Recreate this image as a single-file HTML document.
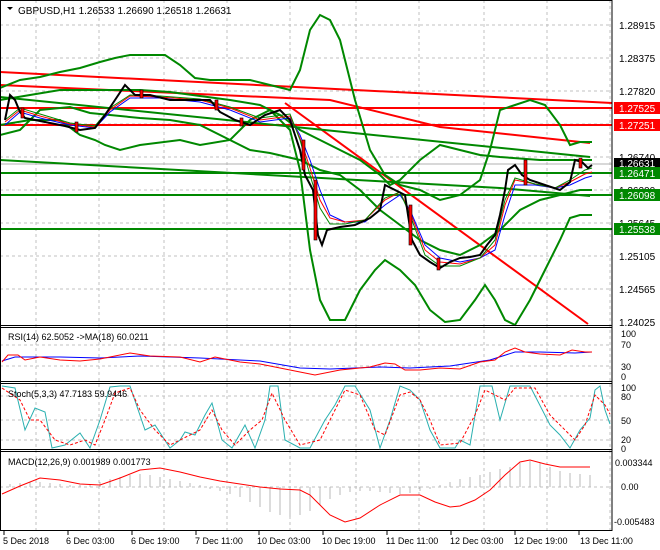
<!DOCTYPE html>
<html><head><meta charset="utf-8"><style>
html,body{margin:0;padding:0;background:#fff;}
svg{display:block;font-family:"Liberation Sans",sans-serif;}
</style></head><body>
<svg width="660" height="550" viewBox="0 0 660 550" xmlns="http://www.w3.org/2000/svg">
<rect width="660" height="550" fill="#fff"/>
<g stroke="#c0c0c0" stroke-dasharray="3,3" stroke-width="1">
<line x1="36" y1="0" x2="36" y2="530"/><line x1="99" y1="0" x2="99" y2="530"/><line x1="164" y1="0" x2="164" y2="530"/><line x1="227" y1="0" x2="227" y2="530"/><line x1="290" y1="0" x2="290" y2="530"/><line x1="356" y1="0" x2="356" y2="530"/><line x1="419" y1="0" x2="419" y2="530"/><line x1="484" y1="0" x2="484" y2="530"/><line x1="547" y1="0" x2="547" y2="530"/><line x1="610" y1="0" x2="610" y2="530"/>
<line x1="0" y1="25" x2="612" y2="25"/><line x1="0" y1="58" x2="612" y2="58"/><line x1="0" y1="91" x2="612" y2="91"/><line x1="0" y1="124" x2="612" y2="124"/><line x1="0" y1="157" x2="612" y2="157"/><line x1="0" y1="190" x2="612" y2="190"/><line x1="0" y1="223" x2="612" y2="223"/><line x1="0" y1="256" x2="612" y2="256"/><line x1="0" y1="289" x2="612" y2="289"/>
<line x1="0" y1="345" x2="612" y2="345"/><line x1="0" y1="366" x2="612" y2="366"/>
<line x1="0" y1="396" x2="612" y2="396"/><line x1="0" y1="420" x2="612" y2="420"/><line x1="0" y1="440" x2="612" y2="440"/>
<line x1="0" y1="487" x2="612" y2="487"/>
</g>
<line x1="0" y1="164" x2="612" y2="164" stroke="#b0b0b0"/>
<g fill="none" stroke-width="2">
<polyline stroke="#f00" points="0,72 612,103"/>
<polyline stroke="#f00" points="0,85 330,100 440,127 590,143"/>
<line stroke="#f00" x1="285" y1="103" x2="588" y2="324"/>
<line stroke="#f00" x1="0" y1="108" x2="612" y2="108"/>
<line stroke="#f00" x1="0" y1="125" x2="612" y2="125"/>
<polyline stroke="#080" points="0,97 590,157"/>
<polyline stroke="#080" points="0,160 500,188 590,196"/>
<line stroke="#080" x1="0" y1="173" x2="612" y2="173"/>
<line stroke="#080" x1="0" y1="195" x2="612" y2="195"/>
<line stroke="#080" x1="0" y1="229" x2="612" y2="229"/>
<polyline stroke="#080" points="0,88 20,80 40,77 60,72 80,68 100,62 115,58 130,55 165,55 180,65 195,78 210,80 250,80 270,85 290,90 300,70 310,30 320,15 330,20 340,40 355,100 370,150 385,175 400,185 420,190 440,200 460,195 480,180 490,150 500,110 515,105 530,100 545,105 560,125 570,145 580,142 592,142"/>
<polyline stroke="#080" points="0,125 30,120 60,120 80,135 95,140 105,145 120,150 140,145 180,140 200,145 230,140 250,120 270,110 290,130 300,170 310,250 320,300 330,320 345,320 360,290 375,270 385,260 400,270 415,285 430,310 445,322 460,320 475,300 485,285 495,300 505,320 515,325 530,300 545,270 560,240 570,218 580,215 592,215"/>
<polyline stroke="#080" points="0,100 30,95 60,90 140,90 170,92 200,96 230,100 260,105 280,115 300,130 320,140 340,150 360,160 380,175 390,185 400,180 420,160 440,145 460,150 480,155 500,157 540,160 592,160"/>
<polyline stroke="#080" points="0,135 20,130 40,110 70,107 90,113 110,115 140,118 170,120 200,125 230,140 250,150 270,153 300,160 320,170 340,175 360,190 380,210 400,225 420,240 440,250 460,255 480,245 500,230 520,210 540,200 560,195 580,190 592,190"/>
</g>
<g fill="none" stroke-width="1">
<polyline stroke="#00f" points="5,125 20,112 40,118 70,125 95,128 110,112 130,98 160,98 200,102 230,110 260,122 290,118 300,135 310,160 320,190 330,215 345,222 365,222 385,205 400,195 410,210 425,245 440,258 460,262 480,258 495,250 505,215 515,185 535,185 555,188 570,185 585,178 592,176"/>
<polyline stroke="#f00" points="5,122 20,110 40,116 70,124 95,127 110,110 130,96 160,97 200,100 230,108 260,120 290,116 300,138 310,168 320,200 330,218 345,222 365,220 385,200 400,192 410,212 425,250 440,262 460,264 480,258 495,245 505,205 515,180 535,184 555,188 570,182 585,174 592,172"/>
<polyline stroke="#080" points="5,120 20,108 40,114 70,123 95,126 110,108 130,95 160,96 200,99 230,107 260,118 290,114 300,140 310,175 320,208 330,224 345,224 365,220 385,198 400,192 410,215 425,255 440,266 460,266 480,258 495,240 505,200 515,178 535,184 555,188 570,180 585,170 592,168"/>
</g>
<polyline fill="none" stroke="#000" stroke-width="2" points="5,120 10,95 15,100 20,112 25,118 35,120 50,123 65,126 80,130 95,128 105,115 115,100 125,85 135,95 150,95 170,100 190,100 210,100 220,112 235,120 250,125 265,115 280,110 290,120 300,150 305,175 313,190 318,235 322,245 327,230 340,227 355,225 370,218 380,210 385,185 395,190 405,195 408,215 412,240 420,255 430,262 440,268 450,262 460,258 470,257 480,255 487,245 495,235 500,215 505,190 508,170 515,165 522,175 530,180 545,185 560,190 570,182 575,160 582,162 588,168 592,165"/>
<g fill="#f00" stroke="#000" stroke-width="0.6">
<rect x="21" y="108" width="3" height="10"/><rect x="75" y="122" width="3" height="10"/><rect x="140" y="90" width="3" height="8"/><rect x="215" y="100" width="3" height="10"/><rect x="240" y="118" width="3" height="8"/><rect x="302" y="140" width="3" height="30"/><rect x="314" y="180" width="3" height="60"/><rect x="409" y="205" width="3" height="40"/><rect x="437" y="258" width="3" height="12"/><rect x="524" y="160" width="3" height="25"/><rect x="579" y="158" width="3" height="10"/>
</g>
<rect x="612" y="0" width="48" height="550" fill="#fff"/>
<g stroke="#000" fill="none">
<rect x="0.5" y="0.5" width="611.5" height="325"/>
<line x1="612" y1="0" x2="612" y2="531"/>
<line x1="0" y1="327.5" x2="612" y2="327.5"/><line x1="0" y1="381.5" x2="612" y2="381.5"/>
<line x1="0" y1="383.5" x2="612" y2="383.5"/><line x1="0" y1="449.5" x2="612" y2="449.5"/>
<line x1="0" y1="451.5" x2="612" y2="451.5"/><line x1="0" y1="530.5" x2="612" y2="530.5"/>
<line x1="0.5" y1="0" x2="0.5" y2="531"/>
</g>
<g font-size="10" fill="#000">
<text x="619" y="29">1.28915</text><text x="619" y="62">1.28375</text><text x="619" y="95">1.27820</text><text x="619" y="161">1.26740</text><text x="619" y="194">1.26200</text><text x="619" y="227">1.25645</text><text x="619" y="260">1.25105</text><text x="619" y="293">1.24565</text><text x="619" y="326">1.24025</text>
</g>
<rect x="614" y="102" width="46" height="12" fill="#f00"/><text x="619" y="112" font-size="10" fill="#fff">1.27525</text>
<rect x="614" y="119" width="46" height="12" fill="#f00"/><text x="619" y="129" font-size="10" fill="#fff">1.27251</text>
<rect x="614" y="158" width="46" height="11" fill="#000"/><text x="619" y="167" font-size="10" fill="#fff">1.26631</text>
<rect x="614" y="167" width="46" height="12" fill="#080"/><text x="619" y="177" font-size="10" fill="#fff">1.26471</text>
<rect x="614" y="189" width="46" height="12" fill="#080"/><text x="619" y="199" font-size="10" fill="#fff">1.26098</text>
<rect x="614" y="223" width="46" height="12" fill="#080"/><text x="619" y="233" font-size="10" fill="#fff">1.25538</text>
<path d="M7,7 L13,7 L10,10 Z" fill="#000"/>
<text x="18" y="14" font-size="10" fill="#000">GBPUSD,H1  1.26533 1.26690 1.26518 1.26631</text>
<g fill="none" stroke-width="1">
<polyline stroke="#00f" points="2,361 15,357 60,357 100,358 140,356 200,358 260,361 300,368 330,369 380,367 410,368 450,366 490,360 515,352 540,352 575,353 592,352"/>
<polyline stroke="#f00" points="2,362 8,355 18,355 25,360 40,357 60,360 80,361 100,359 130,353 150,356 180,357 200,362 215,357 240,362 260,364 280,368 300,372 315,375 340,370 370,367 385,363 395,364 405,370 420,370 440,368 460,369 480,362 495,360 505,352 515,348 525,352 540,354 560,355 572,350 585,352 592,352"/>
</g>
<g font-size="9" fill="#000"><text x="8" y="340">RSI(14) 62.5052  -&gt;MA(18) 60.0211</text>
<text x="621" y="337">100</text><text x="621" y="348">70</text><text x="621" y="370">30</text><text x="621" y="380">0</text></g>
<polyline fill="none" stroke="#2ab0b0" stroke-width="1" points="2,386 15,388 25,430 35,408 45,412 52,448 65,445 80,433 90,448 100,420 110,387 120,386 130,386 145,430 155,425 170,448 180,440 185,432 195,435 205,415 212,403 222,440 232,448 245,425 255,448 265,420 270,386 278,386 285,440 300,448 310,448 325,420 335,405 345,386 355,386 370,410 380,448 390,420 400,386 410,390 420,400 425,415 430,430 440,448 455,448 460,440 470,445 480,386 492,386 500,420 510,386 530,386 550,425 560,435 570,448 580,430 590,418 595,390 600,386 605,410 610,424"/>
<polyline fill="none" stroke="#f00" stroke-width="1" stroke-dasharray="3,2" points="2,388 20,400 30,420 40,420 55,440 70,445 85,440 95,445 105,420 115,393 130,388 140,410 155,430 170,445 190,435 200,430 212,410 222,430 235,445 250,430 262,420 272,393 285,420 300,445 320,440 335,410 345,390 360,395 375,430 385,435 400,395 410,392 420,400 430,420 440,445 460,443 475,415 485,390 495,395 505,400 515,388 535,388 550,415 565,430 575,440 585,425 595,395 605,405 610,414"/>
<g font-size="9" fill="#000"><text x="8" y="397">Stoch(5,3,3) 47.7183 59.9446</text>
<text x="621" y="391">100</text><text x="621" y="400">80</text><text x="621" y="424">50</text><text x="621" y="443">20</text><text x="621" y="452">0</text></g>
<g stroke="#b8b8b8" stroke-width="1">
<path d="M10,487v-3M20,487v-4M30,487v-5M40,487v-5M50,487v-4M60,487v-3M70,487v-2M80,487v-2M90,487v-3M100,487v-5M110,487v-8M120,487v-10M130,487v-12M140,487v-13M150,487v-12M160,487v-10M170,487v-8M180,487v-6M190,487v-4M200,487v-2M210,487v2M220,487v4M230,487v7M240,487v10M250,487v15M260,487v20M270,487v25M280,487v28M290,487v30M300,487v28M310,487v24M320,487v18M330,487v12M340,487v8M350,487v5M360,487v4M370,487v4M380,487v5M390,487v6M400,487v7M410,487v6M420,487v4M430,487v2M440,487v-2M450,487v-5M460,487v-8M470,487v-10M480,487v-12M490,487v-15M500,487v-18M510,487v-20M520,487v-24M530,487v-26M540,487v-24M550,487v-20M560,487v-16M570,487v-14M580,487v-13M590,487v-12"/>
</g>
<polyline fill="none" stroke="#f00" stroke-width="1" points="2,494 20,486 40,478 60,480 80,484 100,485 120,478 140,470 160,468 180,472 200,477 220,481 240,484 260,487 280,489 300,490 310,495 320,505 330,515 345,522 360,518 380,505 400,495 420,495 435,502 450,507 460,506 475,500 490,490 505,475 520,462 530,460 545,464 560,467 590,467"/>
<g font-size="9" fill="#000"><text x="8" y="465">MACD(12,26,9) 0.001989 0.001773</text>
<text x="615" y="466">0.003344</text><text x="621" y="490">0.00</text><text x="614" y="525">-0.005483</text></g>
<g stroke="#000"><line x1="4" y1="531" x2="4" y2="535"/><line x1="68" y1="531" x2="68" y2="535"/><line x1="132" y1="531" x2="132" y2="535"/><line x1="196" y1="531" x2="196" y2="535"/><line x1="259" y1="531" x2="259" y2="535"/><line x1="323" y1="531" x2="323" y2="535"/><line x1="387" y1="531" x2="387" y2="535"/><line x1="451" y1="531" x2="451" y2="535"/><line x1="515" y1="531" x2="515" y2="535"/><line x1="579" y1="531" x2="579" y2="535"/></g>
<g font-size="9" fill="#000">
<text x="3" y="544">5 Dec 2018</text><text x="66" y="544">6 Dec 03:00</text><text x="131" y="544">6 Dec 19:00</text><text x="195" y="544">7 Dec 11:00</text><text x="257" y="544">10 Dec 03:00</text><text x="322" y="544">10 Dec 19:00</text><text x="386" y="544">11 Dec 11:00</text><text x="450" y="544">12 Dec 03:00</text><text x="514" y="544">12 Dec 19:00</text><text x="580" y="544">13 Dec 11:00</text>
</g>
</svg>
</body></html>
